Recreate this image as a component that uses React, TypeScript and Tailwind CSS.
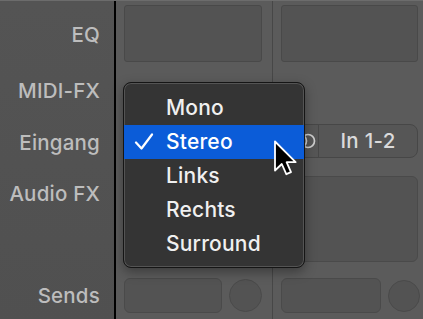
const FONT = { fontFamily: 'Inter, "Open Sans", "Liberation Sans", sans-serif' }

const ITEMS = ['Mono', 'Stereo', 'Links', 'Rechts', 'Surround']

function Label({ text, mt }: { text: string; mt: string }) {
  return (
    <div className={`${mt} h-6 pr-[14px] text-right text-[20.5px] font-medium leading-6 tracking-[0.2px] text-[#bdbdbd]`}>
      {text}
    </div>
  )
}

function SendsRow({ rectW, dot }: { rectW: string; dot: string }) {
  return (
    <div className="mt-[16px] flex items-center gap-[7px]">
      <div className={`h-[35px] ${rectW} rounded-[6px] border border-[#4a4a4a] bg-[#535353]`} />
      <div className={`${dot} rounded-full border border-[#4a4a4a] bg-[#535353]`} />
    </div>
  )
}

function StereoIcon() {
  return (
    <svg width="24" height="18" viewBox="0 0 24 18" fill="none" stroke="#cfcfcf" strokeWidth="1.7">
      <circle cx="8" cy="9" r="6.5" />
      <circle cx="16" cy="9" r="6.5" />
    </svg>
  )
}

function Cursor() {
  return (
    <svg className="absolute left-[273px] top-[139px]" width="25" height="37" viewBox="0 0 25 37">
      <path
        d="M2 1.5 L2 30.5 L8.8 24 L13.3 34.2 L18 32.2 L13.6 22.2 L22.6 22.2 Z"
        fill="#000"
        stroke="#fff"
        strokeWidth="1.8"
        strokeLinejoin="round"
      />
    </svg>
  )
}

function PopupMenu() {
  return (
    <div className="absolute left-[123px] top-[81px] h-[186px] w-[182px] rounded-[8px] border border-[#151515] bg-[#343434] shadow-[inset_0_0_0_1px_rgba(255,255,255,0.16),0_4px_12px_rgba(0,0,0,0.35)]">
      <div className="pt-[8px]">
        {ITEMS.map((item) => {
          const active = item === 'Stereo'
          return (
            <div
              key={item}
              className={`relative flex h-[34px] items-center pl-[42px] text-[21px] font-medium tracking-[0.2px] ${
                active ? 'bg-[#0b5cd8] text-white' : 'text-[#f0f0f0]'
              }`}
            >
              {active && (
                <svg className="absolute left-[10px] top-[8px]" width="20" height="18" viewBox="0 0 20 18" fill="none">
                  <path d="M2 9.5 L7.5 15.5 L18 1.5" stroke="#fff" strokeWidth="2.2" strokeLinecap="round" strokeLinejoin="round" />
                </svg>
              )}
              {item}
            </div>
          )
        })}
      </div>
    </div>
  )
}

export default function App() {
  return (
    <div className="relative flex h-[319px] w-[423px] overflow-hidden border-t border-[#6c6c6c] bg-[#5b5b5b]" style={FONT}>
      <div className="w-[116px] shrink-0 border-r-2 border-black bg-gradient-to-b from-[#545454] to-[#505050]">
        <Label text="EQ" mt="mt-[22px]" />
        <Label text="MIDI-FX" mt="mt-[32px]" />
        <Label text="Eingang" mt="mt-[28px]" />
        <Label text="Audio FX" mt="mt-[27px]" />
        <Label text="Sends" mt="mt-[78px]" />
      </div>

      <div className="flex w-[157px] shrink-0 flex-col border-r border-[#474747] pl-[8px] pt-[4px]">
        <div className="h-[57px] w-[138px] rounded-[3px] border border-[#494949] bg-[#535353]" />
        <div className="mt-[62px] h-[34px] w-[138px] rounded-[8px] border border-[#474747] bg-[#565656]" />
        <div className="mt-[18px] h-[86px] w-[138px] rounded-[6px] border border-[#4a4a4a] bg-[#535353]" />
        <SendsRow rectW="w-[98px]" dot="h-[33px] w-[33px]" />
      </div>

      <div className="flex flex-1 flex-col pl-[8px] pt-[4px]">
        <div className="h-[57px] w-[137px] rounded-[3px] border border-[#494949] bg-[#535353]" />
        <div className="mt-[62px] flex h-[34px] w-[137px] overflow-hidden rounded-[8px] border border-[#474747] bg-[#565656]">
          <div className="flex w-[37px] items-center justify-center border-r border-[#474747] pl-[8px]">
            <StereoIcon />
          </div>
          <div className="flex flex-1 items-center justify-center text-[20.5px] font-medium tracking-[0.3px] text-[#dadada]">
            In 1-2
          </div>
        </div>
        <div className="mt-[18px] h-[86px] w-[137px] rounded-[6px] border border-[#4a4a4a] bg-[#535353]" />
        <SendsRow rectW="w-[100px]" dot="h-[32px] w-[32px]" />
      </div>

      <PopupMenu />
      <Cursor />
    </div>
  )
}
